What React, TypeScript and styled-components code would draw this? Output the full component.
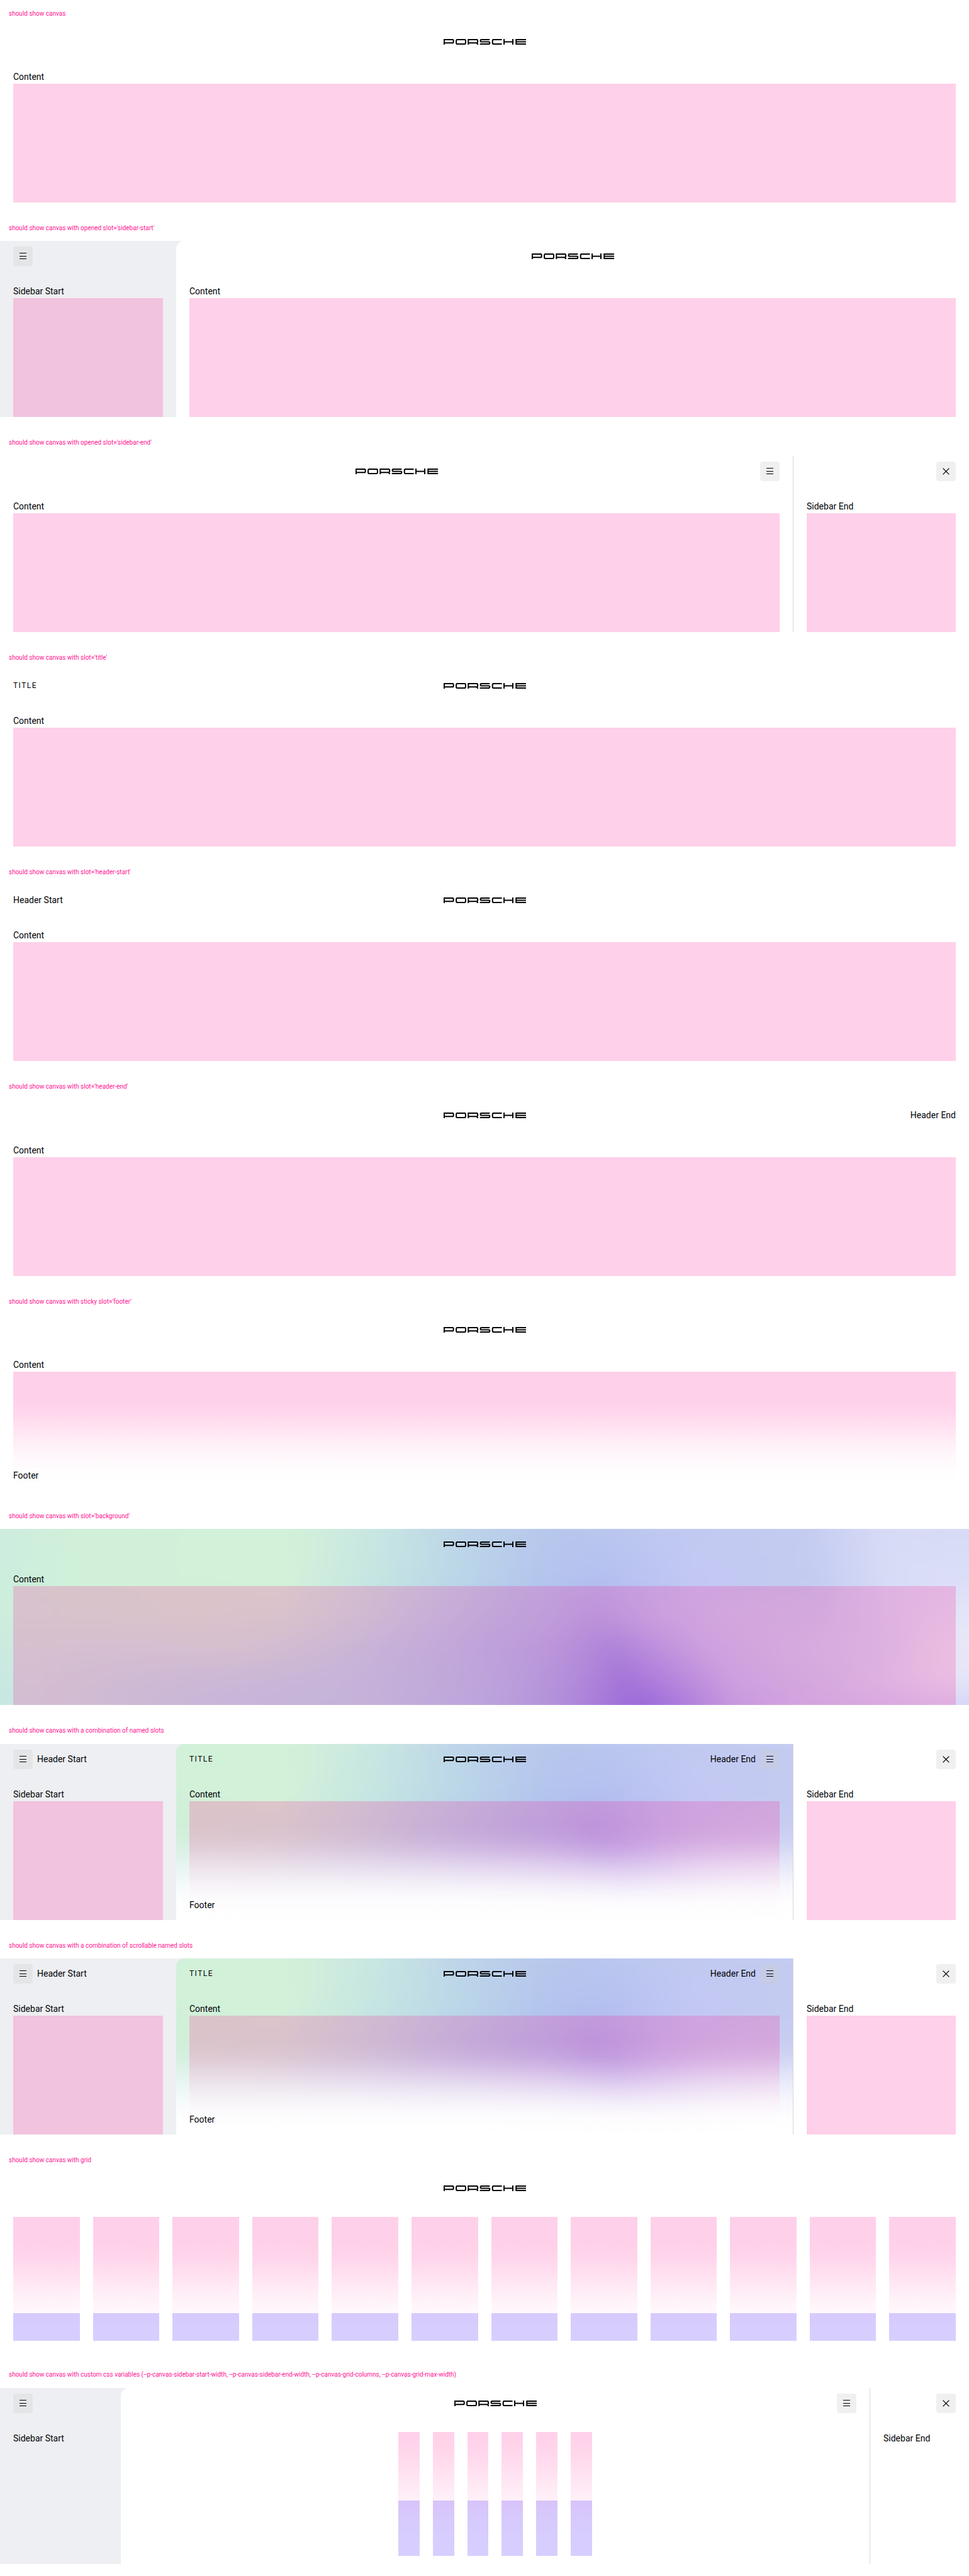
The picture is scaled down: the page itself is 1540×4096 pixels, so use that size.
import React, { ReactNode } from 'react';
import styled, { createGlobalStyle, css } from 'styled-components';

const PINK = 'rgba(255, 20, 147, 0.2)';
const VIOLET = 'rgba(55, 15, 255, 0.2)';
const SHADING = '#eeeff2';

const GlobalStyle = createGlobalStyle`
  *, *::before, *::after { box-sizing: border-box; }
  body {
    margin: 0;
    background: #fff;
    color: #010205;
    font: 400 14px/21px Roboto, "Liberation Sans", sans-serif;
  }
  p { margin: 0; }
`;

const Page = styled.main`
  display: grid;
  grid-template-columns: minmax(0, 1fr);
  grid-auto-rows: 1fr;
  min-height: 100vh;
`;

const Example = styled.section`
  padding-bottom: 19px;
`;

const ExampleTitle = styled.h2`
  display: flex;
  align-items: center;
  height: 42px;
  margin: 0;
  padding: 0 14px;
  color: #ff1493;
  font-size: 10px;
  font-weight: 400;
`;

const Frame = styled.div`
  position: relative;
  isolation: isolate;
  display: flex;
  min-height: 280px;
`;

const padding = css`
  padding: 0 21px;
`;

const Sidebar = styled.aside<{ $width: number }>`
  position: relative;
  display: flex;
  flex-direction: column;
  flex: none;
  width: ${({ $width }) => $width}px;
`;

const SidebarStart = styled(Sidebar)`
  background: ${SHADING};

  /* concave corner that rounds the top of the neighbouring canvas */
  &::after {
    content: '';
    position: absolute;
    top: 0;
    left: 100%;
    width: 14px;
    height: 14px;
    background: radial-gradient(circle at 100% 100%, transparent 14px, ${SHADING} 15px);
  }
`;

const SidebarEnd = styled(Sidebar)`
  background: #fff;
  border-left: 1px solid #d8d8db;
`;

const Main = styled.div`
  position: relative;
  display: flex;
  flex-direction: column;
  flex: 1;
  min-width: 0;
`;

const SidebarHeader = styled.div<{ $end?: boolean }>`
  ${padding}
  display: flex;
  align-items: center;
  justify-content: ${({ $end }) => ($end ? 'flex-end' : 'flex-start')};
  gap: 7px;
  height: 49px;
`;

const Header = styled.header`
  ${padding}
  display: grid;
  grid-template-columns: 1fr auto 1fr;
  align-items: center;
  height: 49px;
`;

const HeaderArea = styled.div<{ $end?: boolean }>`
  display: flex;
  align-items: center;
  justify-content: ${({ $end }) => ($end ? 'flex-end' : 'flex-start')};
  gap: 7px;
`;

const Title = styled.span`
  font-size: 12px;
  letter-spacing: 0.12em;
  text-transform: uppercase;
`;

const Body = styled.div`
  ${padding}
  display: flex;
  flex-direction: column;
  flex: 1;
  padding-top: 21px;
`;

const Block = styled.div`
  flex: 1;
  background: ${PINK};
`;

const Footer = styled.footer`
  position: absolute;
  inset: auto 0 0;
  padding: 119px 21px 13px;
  background: linear-gradient(
    rgba(255, 255, 255, 0) 0%,
    rgba(255, 255, 255, 0.05) 10%,
    rgba(255, 255, 255, 0.15) 20%,
    rgba(255, 255, 255, 0.3) 30%,
    rgba(255, 255, 255, 0.48) 40%,
    rgba(255, 255, 255, 0.64) 50%,
    rgba(255, 255, 255, 0.78) 60%,
    rgba(255, 255, 255, 0.89) 70%,
    rgba(255, 255, 255, 0.96) 80%,
    rgba(255, 255, 255, 0.99) 90%,
    #fff 100%
  );
`;

const Columns = styled.div<{ $count: number; $maxWidth?: number }>`
  display: grid;
  grid-template-columns: repeat(${({ $count }) => $count}, 1fr);
  gap: 21px;
  flex: 1;
  width: 100%;
  max-width: ${({ $maxWidth }) => ($maxWidth ? `${$maxWidth}px` : 'none')};
  margin: 0 auto;
`;

const Cell = styled.div<{ $violet?: boolean; $height?: number }>`
  height: ${({ $height }) => ($height ? `${$height}px` : 'auto')};
  background: ${({ $violet }) => ($violet ? VIOLET : PINK)};
`;

const IconButton = styled.button`
  display: grid;
  place-items: center;
  width: 31px;
  height: 31px;
  padding: 0;
  border: 0;
  border-radius: 4px;
  background: rgba(204, 204, 204, 0.3);
  color: inherit;
  cursor: pointer;
`;

const Icon = styled.svg`
  display: block;
  width: 21px;
  height: 21px;
  fill: none;
  stroke: currentColor;
`;

const LogoMark = styled.svg`
  display: block;
  width: 131px;
  height: 9px;
  fill: none;
  stroke: #010205;
  stroke-width: 2.3;
`;

const Backdrop = styled.div`
  position: absolute;
  inset: 0;
  z-index: -1;
  overflow: hidden;
`;

const Soften = styled.div`
  position: absolute;
  inset: -24px;
  filter: blur(12px);
`;

const Band = styled.div<{ $colors: string; $from: number; $to: number }>`
  position: absolute;
  inset: 0;
  background: linear-gradient(to right, ${({ $colors }) => $colors});
  ${({ $from, $to }) =>
    $to > 0 && css`mask-image: linear-gradient(transparent ${$from}%, #000 ${$to}%);`}
`;

/* Colour rows of the mesh, each fading in over the one above it. */
const bands = [
  { at: 0, colors: '#cfecdf 0%, #cfecdf 2%, #d0f0da 9%, #d2f1d9 20%, #d2f1d9 31%, #cae7e2 39%, #bfd6e8 47%, #b9c8ec 57%, #bfcaf0 68%, #c5ccf1 82%, #d8dbf6 90%, #d6daf5 100%' },
  { at: 32, colors: '#cceedd 0%, #cceedd 2%, #d0f0d9 9%, #d3f1d9 30%, #c5e5e2 39%, #b9d3e9 49%, #b4c4ed 56%, #b4bff0 62%, #c3c8f3 71%, #c3ccf0 83%, #d9dcf6 91%, #dcdff7 100%' },
  { at: 50, colors: '#ccedde 0%, #ceeedc 5%, #d1efd8 20%, #d0eeda 30%, #c5e3e2 38%, #bbd7e8 44%, #b4cbeb 50%, #b0beed 57%, #acb1ed 61%, #c0c3f2 68%, #c8cbf2 74%, #cacef1 83%, #d8dbf5 91%, #e6e7f8 99%' },
  { at: 65, colors: '#c9ebe1 0%, #cdeadf 4%, #cceae1 15%, #cceade 26%, #bddee9 37%, #b2c9ed 48%, #acb9ed 56%, #9a9eec 63%, #adaef0 67%, #c2c4f3 72%, #cccff2 80%, #d4d8f4 90%, #e5e6f6 95%, #e8e7f8 99%' },
  { at: 80, colors: '#c6e9e2 0%, #cbe9e0 5%, #c5e5e4 12%, #c0e1e8 22%, #b9ddea 35%, #b1cfed 46%, #abc1ee 53%, #a0aaed 59%, #8e8dec 64%, #a5a3f0 69%, #c3c4f3 75%, #cccff2 84%, #dadcf5 91%, #e6e6f7 96%, #e5e5f8 99%' },
  { at: 94, colors: '#c4e8e2 0%, #c9e7e2 5%, #c4e4e6 12%, #bbdeea 21%, #b7daed 38%, #acc7ef 50%, #a1b0ed 57%, #8785ec 64%, #817fec 66%, #9896f0 70%, #bab8f3 75%, #c8c6f3 81%, #d1cef5 91%, #d7d5f6 99%' },
];

const Mesh = () => (
  <Backdrop>
    <Soften>
      {bands.map(({ at, colors }, i) => (
        <Band key={at} $colors={colors} $from={i ? bands[i - 1].at : 0} $to={at} />
      ))}
    </Soften>
  </Backdrop>
);

const Logo = () => (
  <LogoMark viewBox="0 0 150 10" preserveAspectRatio="none" role="img" aria-label="Porsche">
    <path d="M1 10V1H16Q18 1 18 3V5Q18 7 16 7H1" />
    <rect x="23" y="1" width="17" height="8" rx="2" />
    <path d="M45 10V1H60Q62 1 62 3V5Q62 7 60 7H45M59 7Q62 7 62 10" />
    <path d="M84 1H69Q67 1 67 3Q67 5 69 5H82Q84 5 84 7Q84 9 82 9H66" />
    <path d="M106 1H91Q89 1 89 3V7Q89 9 91 9H106" />
    <path d="M110 0V10M126 0V10M110 5H126" />
    <path d="M150 1H132V9H150M132 5H150" />
  </LogoMark>
);

const MenuButton = ({ label }: { label: string }) => (
  <IconButton type="button" aria-label={label}>
    <Icon viewBox="0 0 21 21">
      <path d="M5 5.5H16M5 10.5H16M5 14.5H16" />
    </Icon>
  </IconButton>
);

const CloseButton = () => (
  <IconButton type="button" aria-label="Close sidebar">
    <Icon viewBox="0 0 24 24" strokeWidth="1.5">
      <path d="M6.4 6.4L17.6 17.6M17.6 6.4L6.4 17.6" />
    </Icon>
  </IconButton>
);

type CanvasProps = {
  name: string;
  title?: string;
  headerStart?: string;
  headerEnd?: string;
  start?: boolean;
  end?: boolean;
  startWidth?: number;
  endWidth?: number;
  bareSidebars?: boolean;
  background?: boolean;
  footer?: ReactNode;
  children?: ReactNode;
};

const Filled = ({ text }: { text: string }) => (
  <>
    <p>{text}</p>
    <Block />
  </>
);

const Canvas = ({
  name,
  title,
  headerStart,
  headerEnd,
  start,
  end,
  startWidth = 280,
  endWidth = 280,
  bareSidebars,
  background,
  footer,
  children,
}: CanvasProps) => (
  <Example>
    <ExampleTitle>{name}</ExampleTitle>
    <Frame>
      {background && <Mesh />}
      {start && (
        <SidebarStart $width={startWidth}>
          <SidebarHeader>
            <MenuButton label="Close sidebar start" />
            {headerStart && <span>{headerStart}</span>}
          </SidebarHeader>
          <Body>{bareSidebars ? <p>Sidebar Start</p> : <Filled text="Sidebar Start" />}</Body>
        </SidebarStart>
      )}
      <Main>
        <Header>
          <HeaderArea>
            {title && <Title>{title}</Title>}
            {!start && headerStart && <span>{headerStart}</span>}
          </HeaderArea>
          <Logo />
          <HeaderArea $end>
            {headerEnd && <span>{headerEnd}</span>}
            {end && <MenuButton label="Toggle sidebar end" />}
          </HeaderArea>
        </Header>
        <Body>{children ?? <Filled text="Content" />}</Body>
        {footer && <Footer>{footer}</Footer>}
      </Main>
      {end && (
        <SidebarEnd $width={endWidth}>
          <SidebarHeader $end>
            <CloseButton />
          </SidebarHeader>
          <Body>{bareSidebars ? <p>Sidebar End</p> : <Filled text="Sidebar End" />}</Body>
        </SidebarEnd>
      )}
    </Frame>
  </Example>
);

type CellsProps = { count: number; maxWidth?: number; violet?: boolean; height?: number };

const Cells = ({ count, maxWidth, violet, height }: CellsProps) => (
  <Columns $count={count} $maxWidth={maxWidth}>
    {Array.from({ length: count }, (_, i) => (
      <Cell key={i} $violet={violet} $height={height} />
    ))}
  </Columns>
);

const App = () => (
  <>
    <GlobalStyle />
    <Page>
      <Canvas name="should show canvas" />
      <Canvas name="should show canvas with opened slot='sidebar-start'" start />
      <Canvas name="should show canvas with opened slot='sidebar-end'" end />
      <Canvas name="should show canvas with slot='title'" title="Title" />
      <Canvas name="should show canvas with slot='header-start'" headerStart="Header Start" />
      <Canvas name="should show canvas with slot='header-end'" headerEnd="Header End" />
      <Canvas name="should show canvas with sticky slot='footer'" footer={<p>Footer</p>} />
      <Canvas name="should show canvas with slot='background'" background />
      <Canvas
        name="should show canvas with a combination of named slots"
        title="Title"
        headerStart="Header Start"
        headerEnd="Header End"
        footer={<p>Footer</p>}
        start
        end
        background
      />
      <Canvas
        name="should show canvas with a combination of scrollable named slots"
        title="Title"
        headerStart="Header Start"
        headerEnd="Header End"
        footer={<p>Footer</p>}
        start
        end
        background
      />
      <Canvas
        name="should show canvas with grid"
        footer={<Cells count={12} height={44} violet />}
      >
        <Cells count={12} />
      </Canvas>
      <Canvas
        name="should show canvas with custom css variables (--p-canvas-sidebar-start-width, --p-canvas-sidebar-end-width, --p-canvas-grid-columns, --p-canvas-grid-max-width)"
        start
        end
        startWidth={192}
        endWidth={158}
        bareSidebars
        footer={<Cells count={6} maxWidth={308} height={88} violet />}
      >
        <Cells count={6} maxWidth={308} />
      </Canvas>
    </Page>
  </>
);

export default App;
